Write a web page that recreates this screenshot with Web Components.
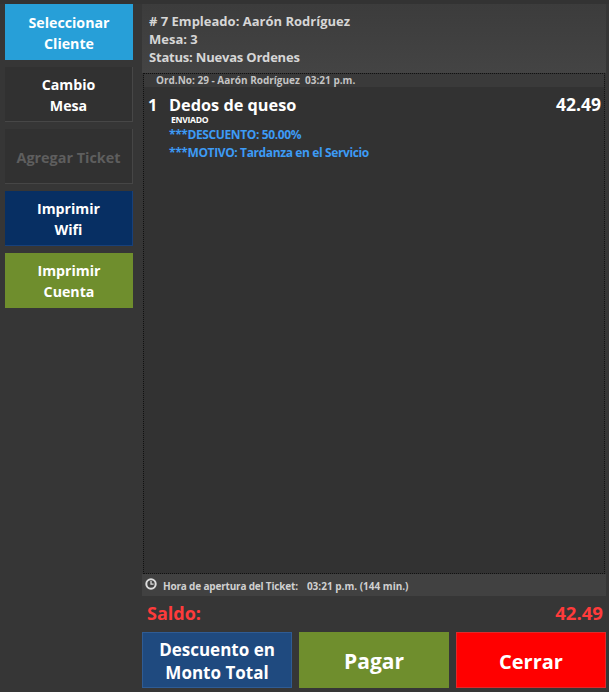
<!DOCTYPE html>
<html lang="es">
<head>
<meta charset="utf-8">
<title>Ticket</title>
<style>
  html, body { margin: 0; height: 100%; background: #363636; }
  body { font-family: "Open Sans", "Liberation Sans", sans-serif; overflow: hidden; }
</style>
</head>
<body>
<pos-screen>
  <pos-button slot="side" tone="cyan" h="56" top="2">Seleccionar<br>Cliente</pos-button>
  <pos-button slot="side" tone="dark" h="55" top="2">Cambio<br>Mesa</pos-button>
  <pos-button slot="side" tone="off" h="55" top="2" size="14.4">Agregar Ticket</pos-button>
  <pos-button slot="side" tone="navy" h="55" top="2">Imprimir<br>Wifi</pos-button>
  <pos-button slot="side" tone="olive" h="55">Imprimir<br>Cuenta</pos-button>

  <ticket-header slot="main"></ticket-header>
  <order-panel slot="main">
    <order-line qty="1" name="Dedos de queso" price="42.49" status="ENVIADO">
      <div>***DESCUENTO: 50.00%</div>
      <div>***MOTIVO: Tardanza en el Servicio</div>
    </order-line>
  </order-panel>
  <ticket-footer slot="main"></ticket-footer>
  <balance-row slot="main" value="42.49"></balance-row>
  <action-bar slot="main">
    <pos-button tone="blue" h="56" size="17" top="1">Descuento en<br>Monto Total</pos-button>
    <pos-button tone="olive" h="56" size="21" top="2">Pagar</pos-button>
    <pos-button tone="red" h="56" size="20" top="2">Cerrar</pos-button>
  </action-bar>
</pos-screen>

<script>
class PosScreen extends HTMLElement {
  constructor() {
    super();
    this.attachShadow({ mode: 'open' });
    this.shadowRoot.innerHTML = `
      <style>
        :host {
          display: grid;
          grid-template-columns: 128px 464px;
          column-gap: 9px;
          padding: 4px 0 4px 5px;
          height: 692px;
          box-sizing: border-box;
          background: linear-gradient(#333 0, #333 4px, #363636 4px);
        }
        .side { display: flex; flex-direction: column; gap: 7px; }
        .main { display: flex; flex-direction: column; height: 684px; }
      </style>
      <div class="side"><slot name="side"></slot></div>
      <div class="main"><slot name="main"></slot></div>
    `;
  }
}

const tones = {
  cyan: 'background:#279fd8;color:#fff;',
  dark: 'background:#313131;color:#fff;border-right:1px solid #474747;border-bottom:1px solid #474747;',
  off: 'background:#313131;color:#5e5e5e;border-right:1px solid #464646;border-bottom:1px solid #464646;',
  navy: 'background:#072f63;color:#fff;border-right:1px solid #17407a;border-bottom:1px solid #17407a;',
  olive: 'background:#6f8e2d;color:#fff;',
  blue: 'background:#1f4a7f;color:#fff;border:1px solid #2f5c94;',
  red: 'background:#ff0000;color:#fff;border:1px solid #e02a2a;',
};

class PosButton extends HTMLElement {
  connectedCallback() {
    if (this.shadowRoot) return;
    this.attachShadow({ mode: 'open' });
    const tone = tones[this.getAttribute('tone')] || '';
    const h = this.getAttribute('h') || 55;
    const size = this.getAttribute('size') || 14.2;
    const top = this.getAttribute('top') || 0;
    this.shadowRoot.innerHTML = `
      <style>
        :host { display: block; }
        div {
          ${tone}
          height: ${h}px;
          box-sizing: border-box;
          padding-top: ${top}px;
          display: flex;
          align-items: center;
          justify-content: center;
          text-align: center;
          font-weight: 700;
          font-size: ${size}px;
          line-height: ${size < 15 ? 21 : 23}px;
        }
      </style>
      <div><span><slot></slot></span></div>
    `;
  }
}

class TicketHeader extends HTMLElement {
  constructor() {
    super();
    this.attachShadow({ mode: 'open' });
    this.shadowRoot.innerHTML = `
      <style>
        :host {
          display: block;
          height: 69px;
          box-sizing: border-box;
          padding: 8px 7px 0;
          background: linear-gradient(#3c3c3c, #444);
          color: #d6d6d6;
          font-weight: 700;
          font-size: 13px;
          line-height: 18px;
        }
        .st { letter-spacing: -0.2px; }
      </style>
      <div># 7 Empleado: Aarón Rodríguez</div>
      <div>Mesa: 3</div>
      <div class="st">Status: Nuevas Ordenes</div>
    `;
  }
}

class OrderPanel extends HTMLElement {
  constructor() {
    super();
    this.attachShadow({ mode: 'open' });
    this.shadowRoot.innerHTML = `
      <style>
        :host {
          display: block;
          height: 501px;
          box-sizing: border-box;
          margin-left: 1px;
          margin-right: 1px;
          border: 1px dotted #111;
          background: #323232;
        }
        .head {
          height: 13px;
          padding-left: 12px;
          background: #3a3a3a;
          color: #c4c4c4;
          font-weight: 700;
          font-size: 10px;
          line-height: 13px;
        }
      </style>
      <div class="head">Ord.No: 29 - Aarón Rodríguez&nbsp; 03:21 p.m.</div>
      <slot></slot>
    `;
  }
}

class OrderLine extends HTMLElement {
  connectedCallback() {
    if (this.shadowRoot) return;
    this.attachShadow({ mode: 'open' });
    this.shadowRoot.innerHTML = `
      <style>
        :host { display: block; padding: 8px 2px 0 4px; color: #fff; font-weight: 700; }
        .row { display: flex; font-size: 16.3px; line-height: 20px; }
        .qty { width: 21px; }
        .name { flex: 1; }
        .price { font-size: 17.5px; margin: -1px 1px 0 0; }
        .status { margin: 1px 0 0 23px; font-size: 8.6px; line-height: 9px; letter-spacing: -0.3px; }
        .notes { margin-left: 21px; margin-top: 1px; color: #3d9bf5; font-size: 12px; line-height: 18px; letter-spacing: -0.38px; }
      </style>
      <div class="row">
        <span class="qty">${this.getAttribute('qty')}</span>
        <span class="name">${this.getAttribute('name')}</span>
        <span class="price">${this.getAttribute('price')}</span>
      </div>
      <div class="status">${this.getAttribute('status')}</div>
      <div class="notes"><slot></slot></div>
    `;
  }
}

class TicketFooter extends HTMLElement {
  constructor() {
    super();
    this.attachShadow({ mode: 'open' });
    this.shadowRoot.innerHTML = `
      <style>
        :host {
          display: flex;
          align-items: center;
          height: 22px;
          box-sizing: border-box;
          padding: 2px 0 0 4px;
          background: #414141;
          color: #d0d0d0;
          font-weight: 700;
          font-size: 10px;
        }
        svg { width: 12px; height: 12px; margin: -5px 6px 0 -1px; flex: none; }
        .t { margin-right: 9px; letter-spacing: -0.18px; }
      </style>
      <svg viewBox="0 0 12 12" fill="none" stroke="#dcdcdc">
        <circle cx="6" cy="6" r="4.7" stroke-width="2"/>
        <path d="M6 3v3.2h2.6" stroke-width="1.3"/>
      </svg>
      <span class="t">Hora de apertura del Ticket:</span>
      <span>03:21 p.m. (144 min.)</span>
    `;
  }
}

class BalanceRow extends HTMLElement {
  connectedCallback() {
    if (this.shadowRoot) return;
    this.attachShadow({ mode: 'open' });
    this.shadowRoot.innerHTML = `
      <style>
        :host {
          display: flex;
          justify-content: space-between;
          align-items: center;
          height: 36px;
          box-sizing: border-box;
          padding: 0 3px 2px 5px;
          color: #ff3b3b;
          font-weight: 700;
          font-size: 18px;
        }
        .v { font-size: 18.6px; margin-top: -1px; }
      </style>
      <span>Saldo:</span>
      <span class="v">${this.getAttribute('value')}</span>
    `;
  }
}

class ActionBar extends HTMLElement {
  constructor() {
    super();
    this.attachShadow({ mode: 'open' });
    this.shadowRoot.innerHTML = `
      <style>
        :host { display: grid; grid-template-columns: repeat(3, 150px); column-gap: 7px; }
      </style>
      <slot></slot>
    `;
  }
}

customElements.define('pos-screen', PosScreen);
customElements.define('pos-button', PosButton);
customElements.define('ticket-header', TicketHeader);
customElements.define('order-panel', OrderPanel);
customElements.define('order-line', OrderLine);
customElements.define('ticket-footer', TicketFooter);
customElements.define('balance-row', BalanceRow);
customElements.define('action-bar', ActionBar);
</script>
</body>
</html>
